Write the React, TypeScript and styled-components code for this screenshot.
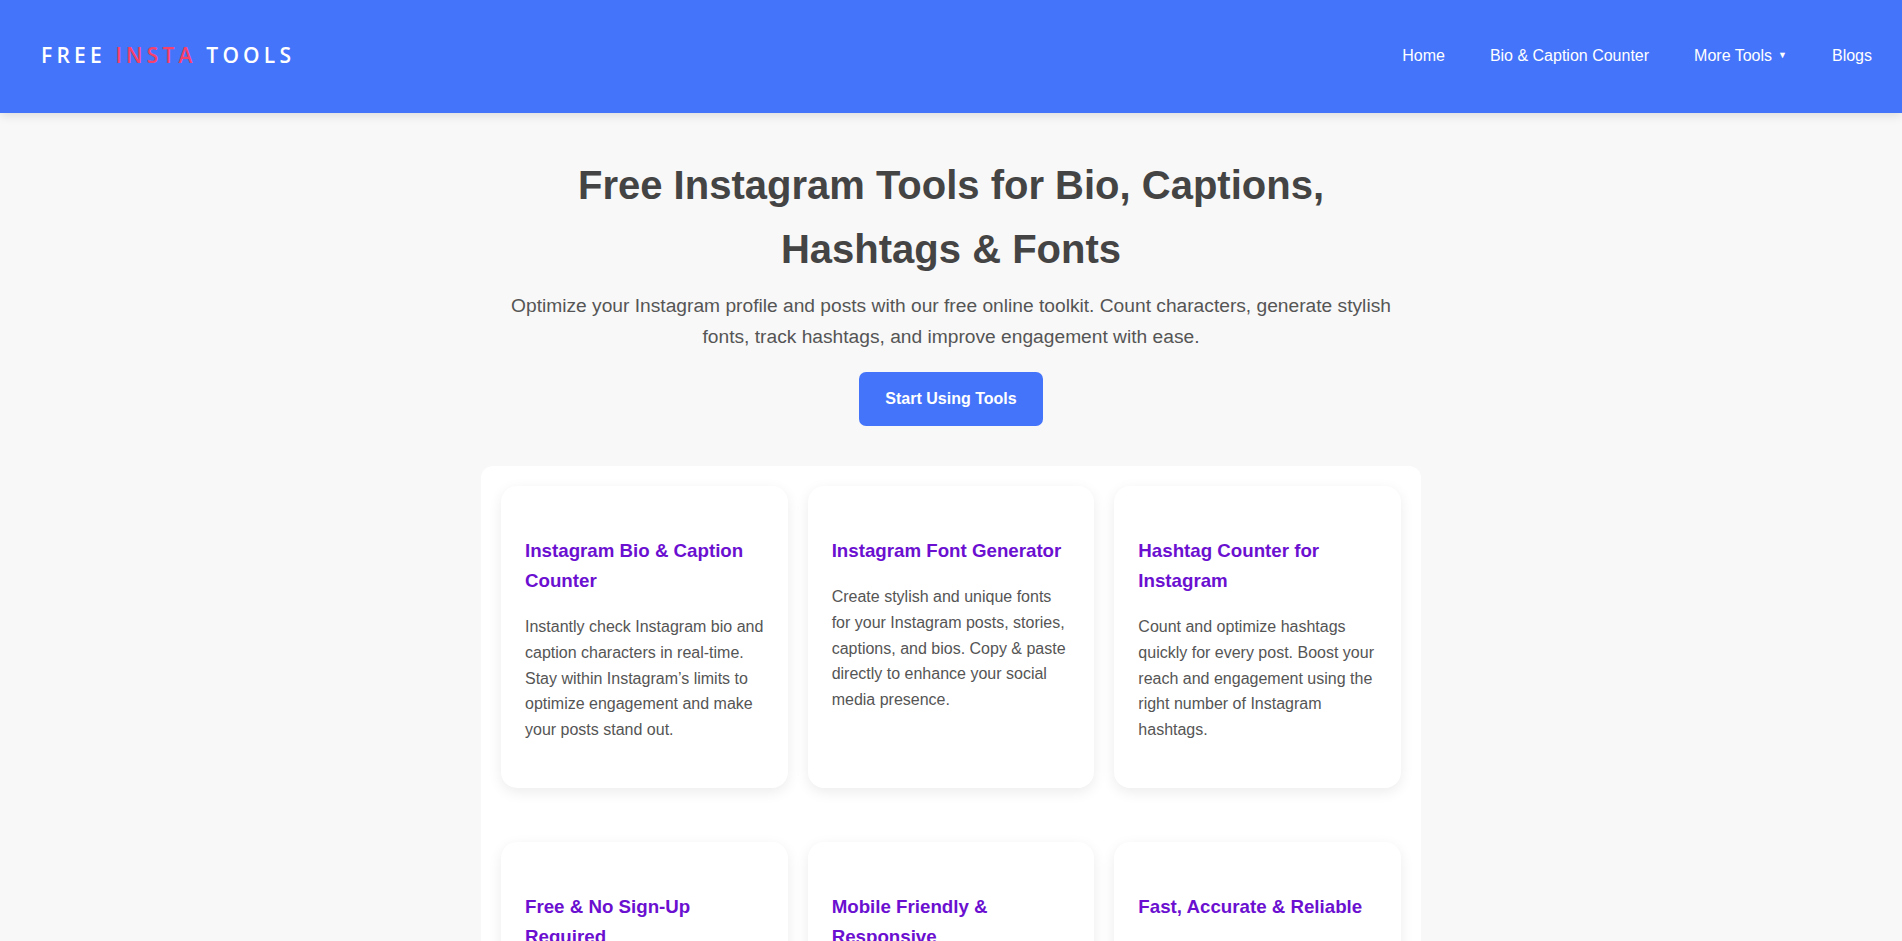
import React from "react";
import styled, { createGlobalStyle } from "styled-components";

const GlobalStyle = createGlobalStyle`
  * {
    box-sizing: border-box;
  }
  body {
    margin: 0;
    background: #f8f8f8;
    font-family: "Liberation Sans", Arial, sans-serif;
    line-height: 1.6;
    color: #444;
  }
`;

const Header = styled.header`
  height: 113px;
  background: #4474f9;
  display: flex;
  align-items: center;
  justify-content: space-between;
  padding: 0 30px 2px 41px;
  box-shadow: 0 2px 10px rgba(0, 0, 0, 0.12);
  position: relative;
  z-index: 2;
`;

const Logo = styled.a`
  font-family: "Open Sans", "Noto Sans", sans-serif;
  font-weight: 600;
  font-size: 21px;
  letter-spacing: 4.2px;
  color: #fff;
  text-decoration: none;
  span {
    color: #f5416b;
  }
`;

const Nav = styled.nav`
  display: flex;
  align-items: center;
  gap: 45px;
`;

const NavLink = styled.a`
  color: #fff;
  font-size: 16px;
  text-decoration: none;
  display: flex;
  align-items: center;
`;

const Caret = styled.span`
  font-size: 9px;
  margin-left: 6px;
`;

const Hero = styled.section`
  padding: 40px 20px 0;
  text-align: center;
`;

const Title = styled.h1`
  font-size: 40px;
  font-weight: 700;
  color: #444;
  line-height: 1.6;
  margin: 0 auto 10px;
  max-width: 800px;
`;

const Lead = styled.p`
  font-size: 19.2px;
  color: #555;
  max-width: 900px;
  margin: 0 auto 20px;
`;

const CtaButton = styled.a`
  display: inline-block;
  background: #4474f9;
  color: #fff;
  font-weight: 700;
  font-size: 16px;
  padding: 14px 26px;
  border-radius: 7px;
  text-decoration: none;
`;

const ToolsPanel = styled.section`
  max-width: 940px;
  margin: 40px auto 40px;
  background: #fff;
  border-radius: 12px;
  padding: 20px;
  display: grid;
  grid-template-columns: repeat(3, 1fr);
  column-gap: 20px;
  row-gap: 54px;
`;

const Card = styled.div`
  background: #fff;
  border-radius: 16px;
  padding: 31px 24px 30px;
  box-shadow: 0 4px 14px rgba(0, 0, 0, 0.08);
`;

const CardTitle = styled.h3`
  font-size: 18.72px;
  color: #6b0fd0;
  margin: 18.72px 0;
`;

const CardText = styled.p`
  font-size: 16px;
  color: #555;
  margin: 16px 0;
`;

const tools = [
  {
    title: "Instagram Bio & Caption Counter",
    text: "Instantly check Instagram bio and caption characters in real-time. Stay within Instagram’s limits to optimize engagement and make your posts stand out.",
  },
  {
    title: "Instagram Font Generator",
    text: "Create stylish and unique fonts for your Instagram posts, stories, captions, and bios. Copy & paste directly to enhance your social media presence.",
  },
  {
    title: "Hashtag Counter for Instagram",
    text: "Count and optimize hashtags quickly for every post. Boost your reach and engagement using the right number of Instagram hashtags.",
  },
  {
    title: "Free & No Sign-Up Required",
    text: "All our Instagram tools are completely free to use. No account, no login and no hidden charges, just open and start.",
  },
  {
    title: "Mobile Friendly & Responsive",
    text: "Use every tool on your phone, tablet or desktop. The layout adapts to any screen so you can edit on the go.",
  },
  {
    title: "Fast, Accurate & Reliable",
    text: "Get instant results with accurate character and hashtag counts that follow the latest Instagram limits.",
  },
];

export default function App() {
  return (
    <>
      <GlobalStyle />
      <Header>
        <Logo href="#">
          FREE <span>INSTA</span> TOOLS
        </Logo>
        <Nav>
          <NavLink href="#">Home</NavLink>
          <NavLink href="#">Bio &amp; Caption Counter</NavLink>
          <NavLink href="#">
            More Tools <Caret>▼</Caret>
          </NavLink>
          <NavLink href="#">Blogs</NavLink>
        </Nav>
      </Header>
      <Hero>
        <Title>Free Instagram Tools for Bio, Captions, Hashtags &amp; Fonts</Title>
        <Lead>
          Optimize your Instagram profile and posts with our free online toolkit. Count
          characters, generate stylish fonts, track hashtags, and improve engagement with
          ease.
        </Lead>
        <CtaButton href="#">Start Using Tools</CtaButton>
      </Hero>
      <ToolsPanel>
        {tools.map((tool) => (
          <Card key={tool.title}>
            <CardTitle>{tool.title}</CardTitle>
            <CardText>{tool.text}</CardText>
          </Card>
        ))}
      </ToolsPanel>
    </>
  );
}
